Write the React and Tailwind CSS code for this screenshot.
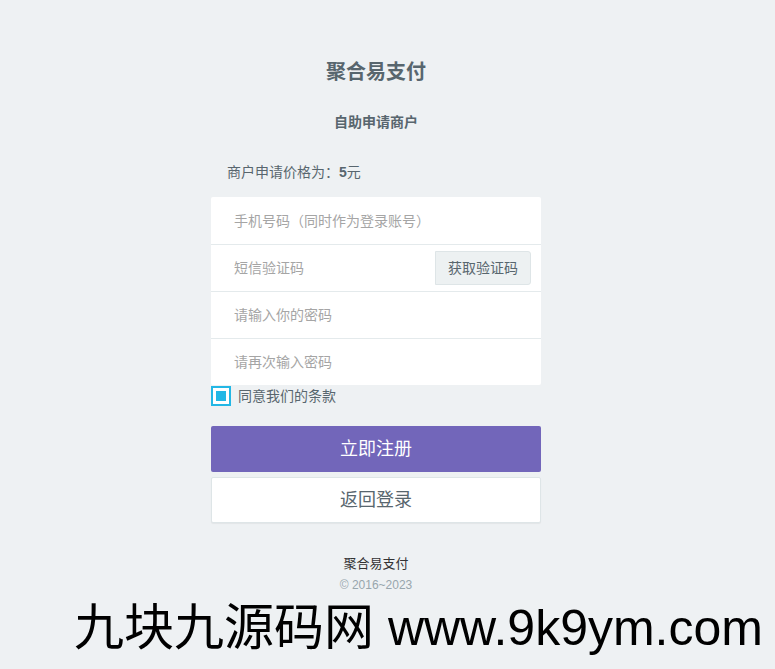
import { useState } from "react"

const FIELDS = [
  "手机号码（同时作为登录账号）",
  "短信验证码",
  "请输入你的密码",
  "请再次输入密码",
]

function App() {
  const [agreed, setAgreed] = useState(true)

  return (
    <div
      className="min-h-[669px] bg-[#eef1f3] text-[#58666e]"
      style={{ fontFamily: '"Liberation Sans", "Noto Sans CJK SC", sans-serif' }}
    >
      <div className="ml-[211px] flex w-[330px] flex-col pt-[58px]">
        <h1 className="text-center text-[20px] font-bold leading-[28px] text-[#58666e]">聚合易支付</h1>
        <p className="mt-[26px] text-center text-[14px] font-bold leading-[20px]">自助申请商户</p>
        <p className="mt-[30px] pl-[16px] text-[14px] leading-[20px]">
          商户申请价格为：<span className="font-bold">5</span>元
        </p>

        <div className="mt-[15px] rounded-[2px] bg-white">
          {FIELDS.map((placeholder, index) => (
            <div
              key={placeholder}
              className={`flex h-[47px] items-center ${index > 0 ? "border-t border-[#e4eaec]" : ""}`}
            >
              <input
                type="text"
                placeholder={placeholder}
                className="h-full min-w-0 flex-1 bg-transparent px-[23px] text-[14px] text-[#58666e] outline-none placeholder:text-[#a5a5a5]"
              />
              {index === 1 ? (
                <button
                  type="button"
                  className="mr-[10px] h-[34px] w-[96px] rounded-r-[3px] border border-[#dee5e7] bg-[#edf1f2] text-[14px] text-[#58666e]"
                >
                  获取验证码
                </button>
              ) : null}
            </div>
          ))}
        </div>

        <label className="mt-[1px] flex cursor-pointer items-center gap-[7px] text-[14px] leading-[20px]">
          <span
            className="flex h-[20px] w-[20px] items-center justify-center border-2 border-[#23b7e5] bg-white"
            onClick={() => setAgreed((value) => !value)}
          >
            {agreed ? <span className="h-[10px] w-[10px] bg-[#23b7e5]" /> : null}
          </span>
          同意我们的条款
        </label>

        <button
          type="button"
          className="mt-[20px] h-[46px] rounded-[2px] bg-[#7266ba] text-[18px] text-white"
        >
          立即注册
        </button>
        <button
          type="button"
          className="mt-[5px] h-[46px] rounded-[2px] border border-[#dee5e7] bg-white text-[18px] text-[#58666e] shadow-[0_1px_1px_rgba(0,0,0,0.05)]"
        >
          返回登录
        </button>

        <div className="mt-[32px] text-center">
          <p className="text-[13px] leading-[18px] text-[#333]">聚合易支付</p>
          <p className="mt-[4px] text-[12px] leading-[16px] text-[#98a6ad]">© 2016~2023</p>
        </div>
      </div>

      <div className="mt-[6px] pl-[74px] text-[50px] leading-[58px] text-black">
        九块九源码网 www.9k9ym.com
      </div>
    </div>
  )
}

export default App
